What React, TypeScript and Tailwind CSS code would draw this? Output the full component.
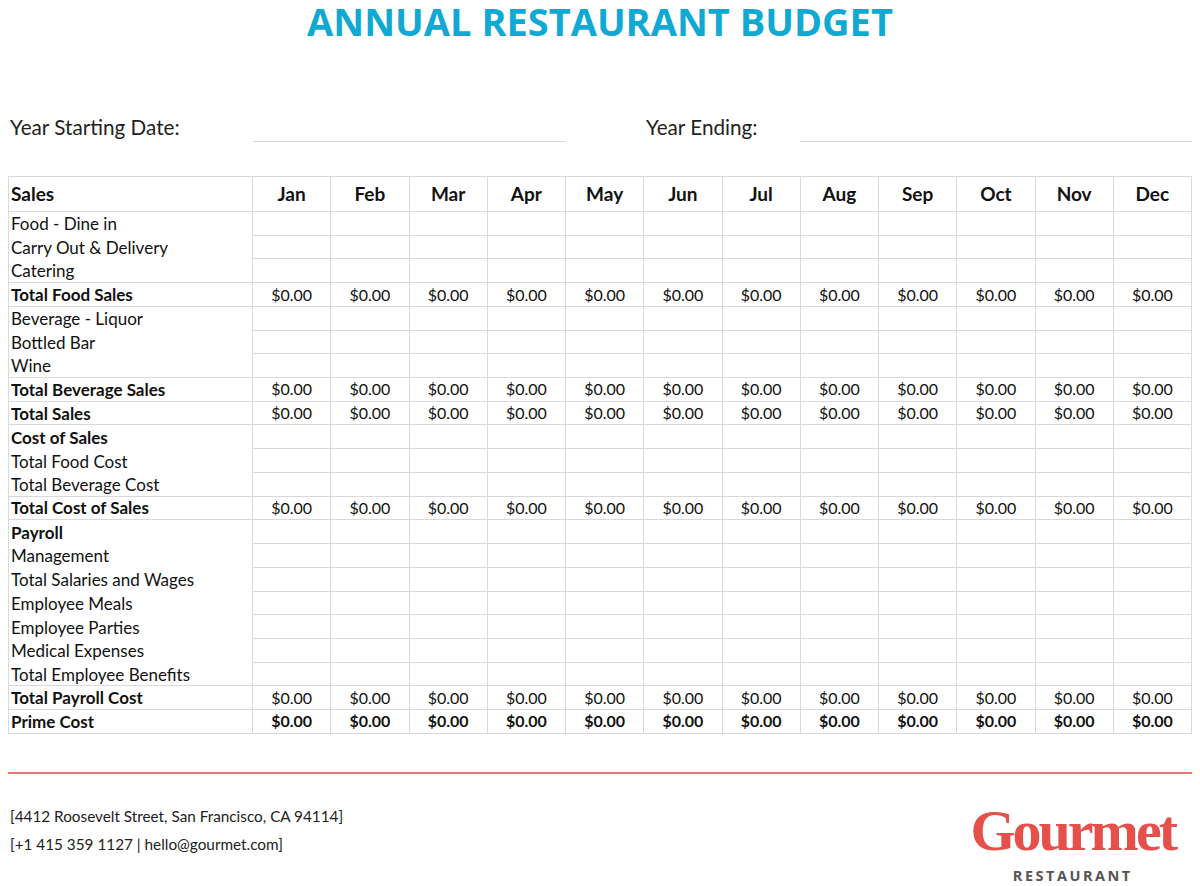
import * as React from 'react'

type Row = {
  label: string
  bold?: boolean
  values?: boolean
  strong?: boolean
  end?: boolean
}

const months = ['Jan', 'Feb', 'Mar', 'Apr', 'May', 'Jun', 'Jul', 'Aug', 'Sep', 'Oct', 'Nov', 'Dec']

const rows: Row[] = [
  { label: 'Food - Dine in' },
  { label: 'Carry Out & Delivery' },
  { label: 'Catering', end: true },
  { label: 'Total Food Sales', bold: true, values: true, end: true },
  { label: 'Beverage - Liquor' },
  { label: 'Bottled Bar' },
  { label: 'Wine', end: true },
  { label: 'Total Beverage Sales', bold: true, values: true, end: true },
  { label: 'Total Sales', bold: true, values: true, end: true },
  { label: 'Cost of Sales', bold: true },
  { label: 'Total Food Cost' },
  { label: 'Total Beverage Cost', end: true },
  { label: 'Total Cost of Sales', bold: true, values: true, end: true },
  { label: 'Payroll', bold: true },
  { label: 'Management' },
  { label: 'Total Salaries and Wages' },
  { label: 'Employee Meals' },
  { label: 'Employee Parties' },
  { label: 'Medical Expenses' },
  { label: 'Total Employee Benefits', end: true },
  { label: 'Total Payroll Cost', bold: true, values: true, end: true },
  { label: 'Prime Cost', bold: true, values: true, strong: true, end: true },
]

const body = { fontFamily: 'Lato, "Open Sans", sans-serif' }

export default function App() {
  return (
    <div className="w-[1200px] h-[886px] bg-white px-2 text-[#111]" style={body}>
      <h1
        className="pt-[2px] text-center text-[38px] leading-[38px] font-bold text-[#0fa9d4]"
        style={{ fontFamily: '"Open Sans", sans-serif' }}
      >
        ANNUAL RESTAURANT BUDGET
      </h1>

      <div className="mt-[75px] flex text-[20.7px] leading-[24px] text-[#222]">
        <div className="w-[245px] pl-[2px]">Year Starting Date:</div>
        <div className="w-[312px] h-[27px] border-b border-[#d6d6d6]" />
        <div className="w-[81px]" />
        <div className="w-[154px]">Year Ending:</div>
        <div className="w-[392px] h-[27px] border-b border-[#d6d6d6]" />
      </div>

      <div className="mt-[34px] grid grid-cols-[244px_repeat(12,1fr)] border-t border-l border-[#d9d9d9]">
        <div className="h-[35px] border-r border-b border-[#d9d9d9] pl-[2px] flex items-center text-[19px] font-bold">
          Sales
        </div>
        {months.map((m) => (
          <div
            key={m}
            className="h-[35px] border-r border-b border-[#d9d9d9] flex items-center justify-center text-[19px] font-bold"
          >
            {m}
          </div>
        ))}

        {rows.map((r) => (
          <React.Fragment key={r.label}>
            <div
              className={`h-[23.73px] border-r border-[#d9d9d9] pl-[2px] flex items-center text-[17px] leading-none ${
                r.end ? 'border-b' : ''
              } ${r.bold ? 'font-bold' : ''}`}
            >
              {r.label}
            </div>
            {months.map((m) => (
              <div
                key={m}
                className={`h-[23.73px] border-r border-b border-[#d9d9d9] flex items-center justify-center text-[16px] leading-none ${
                  r.strong ? 'font-bold' : ''
                }`}
              >
                {r.values ? '$0.00' : ''}
              </div>
            ))}
          </React.Fragment>
        ))}
      </div>

      <div className="mt-[38px] h-[2px] bg-[#ee7670]" />

      <div className="pt-[28px] flex justify-between">
        <div className="pl-[2px] text-[15.3px] leading-[28px] text-[#222]">
          <div>[4412 Roosevelt Street, San Francisco, CA 94114]</div>
          <div>[+1 415 359 1127 | hello@gourmet.com]</div>
        </div>
        <div className="mr-[17px] flex flex-col items-center">
          <div
            className="text-[58px] leading-none font-bold tracking-[-3px] text-[#e5504b]"
            style={{ fontFamily: '"Liberation Serif", serif' }}
          >
            Gourmet
          </div>
          <div
            className="mt-[9px] text-[14.5px] leading-none font-bold tracking-[2.5px] text-[#555]"
            style={{ fontFamily: '"Open Sans", sans-serif' }}
          >
            RESTAURANT
          </div>
        </div>
      </div>
    </div>
  )
}
